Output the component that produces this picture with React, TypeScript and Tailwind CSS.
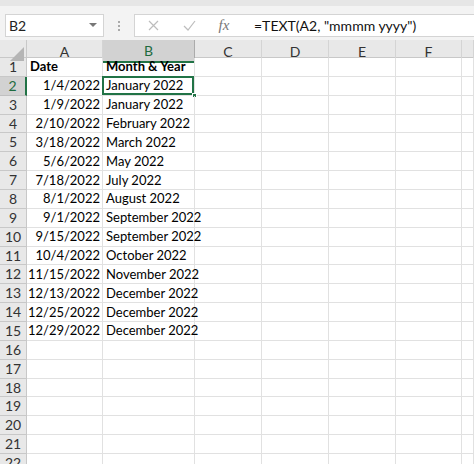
import React from 'react'

const rows: [string, string][] = [
  ['1/4/2022', 'January 2022'],
  ['1/9/2022', 'January 2022'],
  ['2/10/2022', 'February 2022'],
  ['3/18/2022', 'March 2022'],
  ['5/6/2022', 'May 2022'],
  ['7/18/2022', 'July 2022'],
  ['8/1/2022', 'August 2022'],
  ['9/1/2022', 'September 2022'],
  ['9/15/2022', 'September 2022'],
  ['10/4/2022', 'October 2022'],
  ['11/15/2022', 'November 2022'],
  ['12/13/2022', 'December 2022'],
  ['12/25/2022', 'December 2022'],
  ['12/29/2022', 'December 2022'],
]

const cols = ['A', 'B', 'C', 'D', 'E', 'F', '']
const gridCols = 'grid grid-cols-[27px_76px_92px_67px_67px_67px_66px_1fr]'
const font = { fontFamily: 'Lato, "Liberation Sans", sans-serif' }

function FormulaBar() {
  return (
    <div className="flex h-[40px] items-start bg-[#f3f3f3] pt-[8px] border-t-[6px] border-[#e6e6e6]">
      <div className="ml-[5px] flex h-[23px] w-[99px] items-center justify-between bg-white border border-[#d4d4d4] pl-[3px] pr-[6px]">
        <span className="text-[14px] text-[#222]">B2</span>
        <svg width="8" height="5" viewBox="0 0 8 5"><path d="M0 0h8L4 4z" fill="#777" /></svg>
      </div>
      <div className="flex w-[30px] h-[23px] flex-col items-center justify-center gap-[2px]">
        <span className="block w-[2px] h-[2px] bg-[#aaa]" />
        <span className="block w-[2px] h-[2px] bg-[#aaa]" />
        <span className="block w-[2px] h-[2px] bg-[#aaa]" />
      </div>
      <div className="flex h-[23px] flex-1 items-center bg-white border-y border-l border-[#d4d4d4]">
        <div className="flex w-[36px] justify-center">
          <svg width="11" height="11" viewBox="0 0 11 11"><path d="M1 1l9 9M10 1l-9 9" stroke="#bdbdbd" strokeWidth="1.2" /></svg>
        </div>
        <div className="flex w-[36px] justify-center">
          <svg width="13" height="11" viewBox="0 0 13 11"><path d="M1 6l4 4 7-9" stroke="#bdbdbd" strokeWidth="1.2" fill="none" /></svg>
        </div>
        <div className="flex w-[34px] justify-center">
          <span className="text-[15px] italic text-[#777]" style={{ fontFamily: '"Liberation Serif", serif' }}>fx</span>
        </div>
        <span className="ml-[13px] text-[14px] text-[#111]">=TEXT(A2, "mmmm yyyy")</span>
      </div>
    </div>
  )
}

function HeaderRow() {
  return (
    <div className={`${gridCols} h-[18px] bg-[#e8e8e8] border-b border-[#c8c8c8]`}>
      <div className="relative border-r border-[#c8c8c8]">
        <svg className="absolute right-[2px] bottom-[2px]" width="14" height="14" viewBox="0 0 14 14"><path d="M14 0v14H0z" fill="#b5b5b5" /></svg>
      </div>
      {cols.map((c, i) => (
        <div
          key={i}
          className={`flex items-center justify-center text-[14px] border-r ${
            c === 'B'
              ? 'bg-[#d2d2d2] text-[#1e6b3f] border-[#ababab] border-b-2 border-b-[#217346]'
              : 'text-[#333] border-[#d4d4d4]'
          }`}
        >
          {c}
        </div>
      ))}
    </div>
  )
}

function Row({ n, a, b }: { n: number; a?: string; b?: string }) {
  const selected = n === 2
  const bold = n === 1
  return (
    <div className={`${gridCols} h-[18.86px] text-[13px] leading-none`}>
      <div
        className={`flex items-center justify-center text-[14px] border-b border-r ${
          selected
            ? 'bg-[#d2d2d2] text-[#1e6b3f] border-b-[#c0c0c0] border-r-2 border-r-[#217346]'
            : 'bg-[#e8e8e8] text-[#333] border-[#c8c8c8]'
        }`}
      >
        {n}
      </div>
      <div className={`flex items-center border-b border-r border-[#e1e1e1] whitespace-nowrap ${bold ? 'justify-start pl-[3px] font-bold' : 'justify-end pr-[2px]'}`}>
        {a}
      </div>
      <div className={`relative flex items-center border-b border-r border-[#e1e1e1] whitespace-nowrap pl-[3px] ${bold ? 'font-bold' : ''}`}>
        <span className="relative z-10">{b}</span>
        {selected && (
          <>
            <div className="absolute -left-[1px] -top-[1px] right-0 bottom-0 border-2 border-[#217346]" />
            <div className="absolute -right-[3px] -bottom-[3px] w-[5px] h-[5px] bg-[#217346] border border-white" />
          </>
        )}
      </div>
      {cols.slice(2).map((c, i) => (
        <div key={i} className="border-b border-r border-[#e1e1e1]" />
      ))}
    </div>
  )
}

export default function App() {
  return (
    <div className="w-[474px] h-[464px] overflow-hidden bg-white text-black" style={font}>
      <FormulaBar />
      <HeaderRow />
      <Row n={1} a="Date" b="Month & Year" />
      {rows.map(([a, b], i) => (
        <Row key={i} n={i + 2} a={a} b={b} />
      ))}
      {[16, 17, 18, 19, 20, 21, 22].map(n => (
        <Row key={n} n={n} />
      ))}
    </div>
  )
}
